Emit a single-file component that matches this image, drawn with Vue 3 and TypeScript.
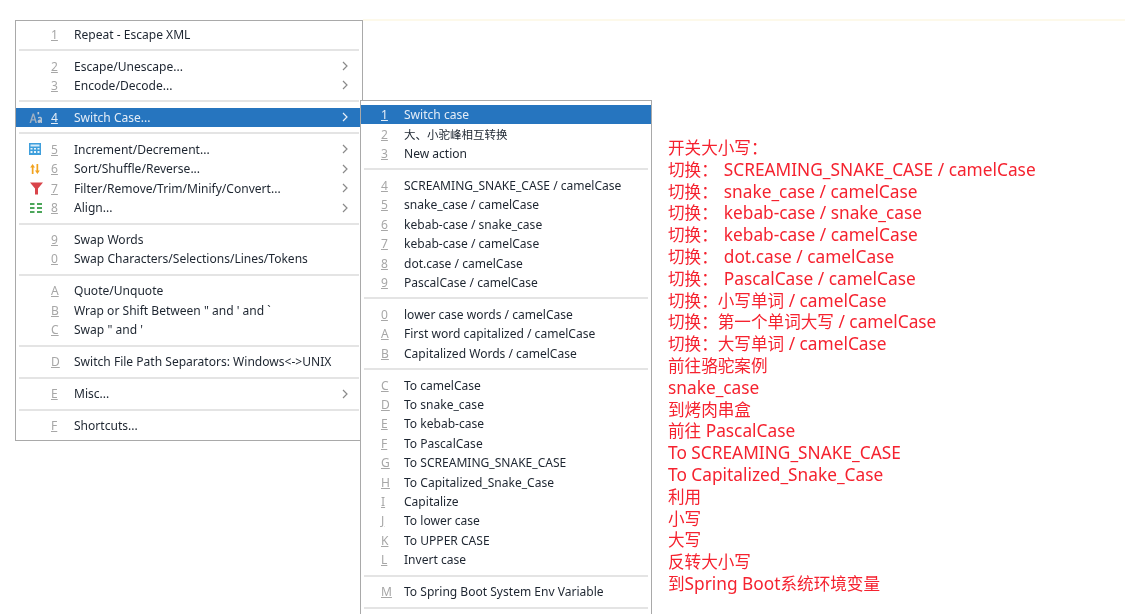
<script setup lang="ts">
interface MenuItem {
  key: string;
  label: string;
  arrow?: boolean;
  active?: boolean;
  icon?: "case" | "calc" | "sort" | "filter" | "align";
}

const mainGroups: MenuItem[][] = [
  [{ key: "1", label: "Repeat - Escape XML" }],
  [
    { key: "2", label: "Escape/Unescape...", arrow: true },
    { key: "3", label: "Encode/Decode...", arrow: true },
  ],
  [{ key: "4", label: "Switch Case...", arrow: true, active: true, icon: "case" }],
  [
    { key: "5", label: "Increment/Decrement...", arrow: true, icon: "calc" },
    { key: "6", label: "Sort/Shuffle/Reverse...", arrow: true, icon: "sort" },
    { key: "7", label: "Filter/Remove/Trim/Minify/Convert...", arrow: true, icon: "filter" },
    { key: "8", label: "Align...", arrow: true, icon: "align" },
  ],
  [
    { key: "9", label: "Swap Words" },
    { key: "0", label: "Swap Characters/Selections/Lines/Tokens" },
  ],
  [
    { key: "A", label: "Quote/Unquote" },
    { key: "B", label: "Wrap or Shift Between \" and ' and `" },
    { key: "C", label: "Swap \" and '" },
  ],
  [{ key: "D", label: "Switch File Path Separators: Windows<->UNIX" }],
  [{ key: "E", label: "Misc...", arrow: true }],
  [{ key: "F", label: "Shortcuts..." }],
];

const subGroups: MenuItem[][] = [
  [
    { key: "1", label: "Switch case", active: true },
    { key: "2", label: "大、小驼峰相互转换" },
    { key: "3", label: "New action" },
  ],
  [
    { key: "4", label: "SCREAMING_SNAKE_CASE / camelCase" },
    { key: "5", label: "snake_case / camelCase" },
    { key: "6", label: "kebab-case / snake_case" },
    { key: "7", label: "kebab-case / camelCase" },
    { key: "8", label: "dot.case / camelCase" },
    { key: "9", label: "PascalCase / camelCase" },
  ],
  [
    { key: "0", label: "lower case words / camelCase" },
    { key: "A", label: "First word capitalized / camelCase" },
    { key: "B", label: "Capitalized Words / camelCase" },
  ],
  [
    { key: "C", label: "To camelCase" },
    { key: "D", label: "To snake_case" },
    { key: "E", label: "To kebab-case" },
    { key: "F", label: "To PascalCase" },
    { key: "G", label: "To SCREAMING_SNAKE_CASE" },
    { key: "H", label: "To Capitalized_Snake_Case" },
    { key: "I", label: "Capitalize" },
    { key: "J", label: "To lower case" },
    { key: "K", label: "To UPPER CASE" },
    { key: "L", label: "Invert case" },
  ],
  [{ key: "M", label: "To Spring Boot System Env Variable" }],
  [],
];

const notes: { text: string; pad?: boolean }[] = [
  { text: "开关大小写：" },
  { text: "切换：", pad: true },
  { text: "切换：", pad: true },
  { text: "切换：", pad: true },
  { text: "切换：", pad: true },
  { text: "切换：", pad: true },
  { text: "切换：", pad: true },
  { text: "切换：小写单词 / camelCase" },
  { text: "切换：第一个单词大写 / camelCase" },
  { text: "切换：大写单词 / camelCase" },
  { text: "前往骆驼案例" },
  { text: "snake_case" },
  { text: "到烤肉串盒" },
  { text: "前往 PascalCase" },
  { text: "To SCREAMING_SNAKE_CASE" },
  { text: "To Capitalized_Snake_Case" },
  { text: "利用" },
  { text: "小写" },
  { text: "大写" },
  { text: "反转大小写" },
  { text: "到Spring Boot系统环境变量" },
];

// the six "switch" lines keep a wider gap after the colon
const padded = [
  "SCREAMING_SNAKE_CASE / camelCase",
  "snake_case / camelCase",
  "kebab-case / snake_case",
  "kebab-case / camelCase",
  "dot.case / camelCase",
  "PascalCase / camelCase",
];

// latin and chinese run at different sizes in the original, so split them
const segments = (text: string) =>
  (text.match(/[\u3000-\u9fff\uff00-\uffef]+|[^\u3000-\u9fff\uff00-\uffef]+/g) || []).map((t) => ({
    text: t,
    cjk: /[\u3000-\u9fff\uff00-\uffef]/.test(t),
  }));
</script>

<template>
  <div class="page">
    <div class="menu main-menu">
      <template v-for="(group, g) in mainGroups" :key="g">
        <div v-if="g > 0" class="sep"></div>
        <div v-for="item in group" :key="item.key" class="row" :class="{ active: item.active }">
          <span class="icon">
            <svg v-if="item.icon === 'case'" width="14" height="13" viewBox="0 0 14 13">
              <path d="M0.5 12 L3.6 2.5 H5 L8 12 H6.4 L5.7 9.6 H2.8 L2.1 12 Z M3.2 8.3 H5.3 L4.3 4.8 Z" fill="#9fb0c2" />
              <path d="M9 6.2 C10 5.4 13 5.3 13 7.6 V12 H11.9 V11.3 C11 12.4 8.6 12.3 8.6 10.4 C8.6 8.8 10.4 8.5 11.9 8.6 C11.9 7 10.2 7 9 7.6 Z" fill="#b9c6d4" />
              <rect x="8.5" y="1" width="1.6" height="2.4" fill="#b9c6d4" />
            </svg>
            <svg v-else-if="item.icon === 'calc'" width="12" height="12" viewBox="0 0 12 12">
              <rect width="12" height="12" fill="#3f9fdc" />
              <rect x="1.5" y="1.5" width="9" height="2" fill="#d5ecf9" />
              <path d="M1.5 5h2v1.5h-2zM5 5h2v1.5H5zM8.5 5h2v1.5h-2zM1.5 8h2v2h-2zM5 8h2v2H5zM8.5 8h2v2h-2z" fill="#e8f5fc" />
            </svg>
            <svg v-else-if="item.icon === 'sort'" class="nudge" width="10" height="12" viewBox="0 0 10 12">
              <path d="M2.6 1 L5 4.4 H3.5 V11 H1.8 V4.4 H0.2 Z" fill="#f2a31f" />
              <path d="M7.4 11 L5 7.6 H6.5 V1 H8.2 V7.6 H9.8 Z" fill="#f2a31f" />
            </svg>
            <svg v-else-if="item.icon === 'filter'" class="nudge" width="13" height="13" viewBox="0 0 13 13">
              <path d="M0 0.5 H13 L8 6.5 V12.5 H5 V6.5 Z" fill="#d9444a" />
            </svg>
            <svg v-else-if="item.icon === 'align'" class="nudge" width="12" height="10" viewBox="0 0 12 10">
              <path d="M0 0h4.5v2H0zM7 0h5v2H7zM0 4h4.5v2H0zM7 4h5v2H7zM0 8h4.5v2H0zM7 8h5v2H7z" fill="#4ca65a" />
            </svg>
          </span>
          <span class="key">{{ item.key }}</span>
          <span class="label">{{ item.label }}</span>
          <svg v-if="item.arrow" class="chevron" width="6" height="10" viewBox="0 0 6 10">
            <path d="M1 1 L5 5 L1 9" fill="none" stroke="currentColor" stroke-width="1.2" />
          </svg>
        </div>
      </template>
    </div>

    <div class="right">
      <div class="menu sub-menu">
        <template v-for="(group, g) in subGroups" :key="g">
          <div v-if="g > 0" class="sep"></div>
          <div v-for="item in group" :key="item.key" class="row" :class="{ active: item.active }">
            <span class="key">{{ item.key }}</span>
            <span class="label">
              <span v-for="(s, i) in segments(item.label)" :key="i" :class="{ cjk: s.cjk }">{{ s.text }}</span>
            </span>
          </div>
        </template>
      </div>
      <div class="notes">
        <div v-for="(line, i) in notes" :key="i" class="note">
          <span v-for="(s, j) in segments(line.text)" :key="j" :class="{ cjk: s.cjk }">{{ s.text }}</span>
          <span v-if="line.pad" class="pad">{{ padded[i - 1] }}</span>
        </div>
      </div>
    </div>
  </div>
</template>

<style>
html,
body {
  margin: 0;
  background: #fff;
}
</style>

<style scoped>
.page {
  display: flex;
  align-items: flex-start;
  box-sizing: border-box;
  height: 614px;
  width: 1125px;
  padding: 19px 0 0 15px;
  overflow: hidden;
  background: #fff;
  font-family: "Noto Sans", "Noto Sans CJK SC", sans-serif;
  filter: blur(0.3px);
}

.menu {
  box-sizing: border-box;
  background: #fff;
  border: 1px solid #a9a9a9;
  padding-top: 4px;
  font-size: 12.05px;
  color: #1d2530;
}

.menu .cjk {
  font-size: 11.5px;
}

.main-menu {
  width: 348px;
  height: 421px;
  margin-top: 1px;
  padding-top: 3.4px;
  flex-shrink: 0;
}

.right {
  flex: 1;
  display: flex;
  align-items: flex-start;
  border-top: 2px solid #fdf9ea;
  min-height: 593px;
}

.sub-menu {
  width: 292px;
  height: 540px;
  margin: 79px 0 0 -3px;
  border-bottom: none;
  flex-shrink: 0;
}

.row {
  display: flex;
  align-items: center;
  height: 19.4px;
  white-space: pre;
}

.row.active {
  background: #2675bf;
  color: #e4edf7;
}

.icon {
  display: flex;
  align-items: center;
  width: 22px;
  margin-left: 13px;
  flex-shrink: 0;
}

.nudge {
  margin-left: 1px;
}

.sub-menu .row {
  padding-left: 20px;
}

.key {
  width: 23px;
  flex-shrink: 0;
  color: #a7a7a7;
}

.key::first-letter {
  text-decoration: underline;
}

.active .key {
  color: #e4edf7;
}

.label {
  flex: 1;
}

.chevron {
  margin-right: 14px;
  color: #8a8a8a;
}

.active .chevron {
  color: #e8f0f9;
}

.sep {
  height: 2px;
  margin: 5.3px 3px;
  background: #e4e4e4;
}

.notes {
  margin: 116px 0 0 16px;
  color: #f5222f;
  font-size: 17.3px;
  white-space: pre;
}

.note {
  height: 21.8px;
  line-height: 21.8px;
}

.notes .cjk {
  font-size: 16.6px;
}

.pad {
  margin-left: 6px;
}
</style>
